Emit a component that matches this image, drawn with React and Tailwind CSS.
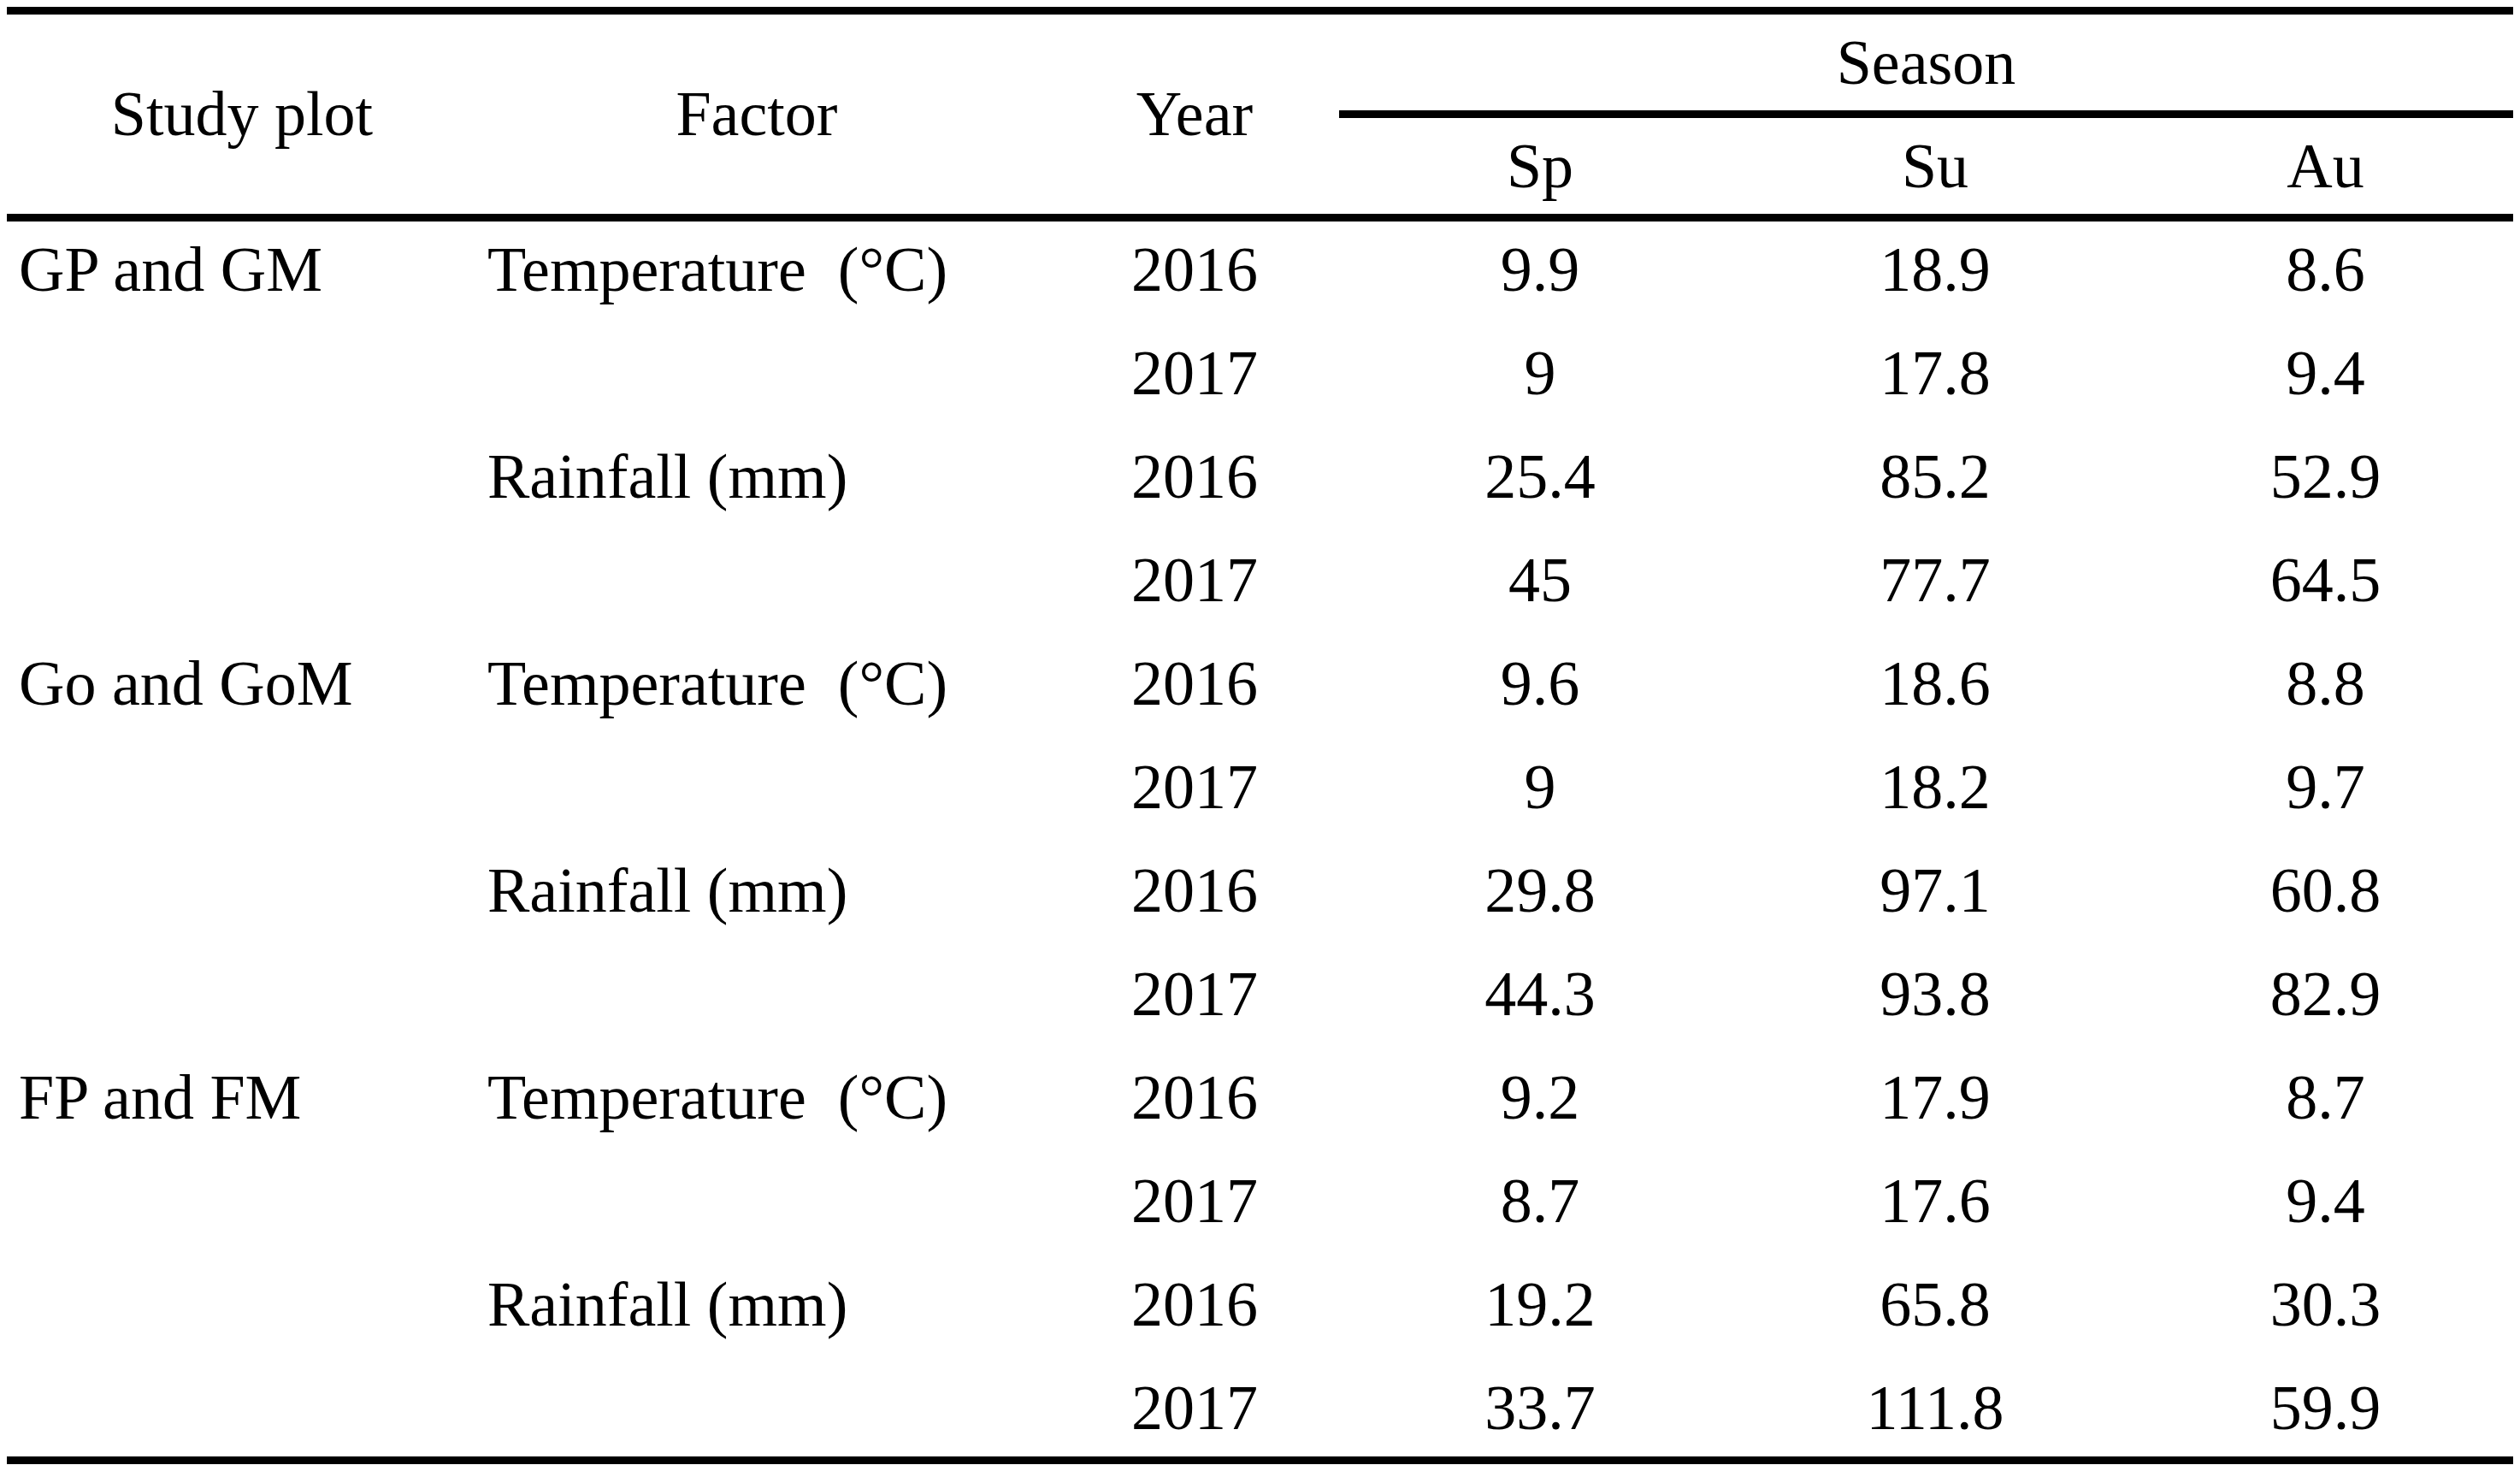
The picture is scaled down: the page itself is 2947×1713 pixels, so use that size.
const plots = [
  {
    name: "GP and GM",
    temp: [
      ["2016", "9.9", "18.9", "8.6"],
      ["2017", "9", "17.8", "9.4"],
    ],
    rain: [
      ["2016", "25.4", "85.2", "52.9"],
      ["2017", "45", "77.7", "64.5"],
    ],
  },
  {
    name: "Go and GoM",
    temp: [
      ["2016", "9.6", "18.6", "8.8"],
      ["2017", "9", "18.2", "9.7"],
    ],
    rain: [
      ["2016", "29.8", "97.1", "60.8"],
      ["2017", "44.3", "93.8", "82.9"],
    ],
  },
  {
    name: "FP and FM",
    temp: [
      ["2016", "9.2", "17.9", "8.7"],
      ["2017", "8.7", "17.6", "9.4"],
    ],
    rain: [
      ["2016", "19.2", "65.8", "30.3"],
      ["2017", "33.7", "111.8", "59.9"],
    ],
  },
];

// flatten into table rows
const rows = [];
plots.forEach((p) => {
  p.temp.forEach((r, i) =>
    rows.push({ plot: i === 0 ? p.name : "", factor: i === 0 ? "Temperature  (°C)" : "", vals: r })
  );
  p.rain.forEach((r, i) =>
    rows.push({ plot: "", factor: i === 0 ? "Rainfall (mm)" : "", vals: r })
  );
});

const cols = "grid grid-cols-[550px_654px_354px_464px_460px_449px]";

export default function App() {
  return (
    <div className="min-h-screen bg-white pl-[8px] pt-[8px] font-['Liberation_Serif','Times_New_Roman',serif] text-[74px] text-black">
      <div className="w-[2931px]">
        <div className="h-[9px] bg-black" />

        {/* Header */}
        <div className={`${cols} grid-rows-[112px_9px_112px]`}>
          <div className="row-span-3 flex items-center justify-center leading-[113px]">Study plot</div>
          <div className="row-span-3 flex items-center justify-center leading-[113px]">Factor</div>
          <div className="row-span-3 flex items-center justify-center pl-[16px] leading-[113px]">Year</div>
          <div className="col-span-3 text-center leading-[112px]">Season</div>
          <div className="col-span-3 bg-black" />
          <div className="pl-[6px] text-center leading-[112px]">Sp</div>
          <div className="pl-[6px] text-center leading-[112px]">Su</div>
          <div className="pl-[10px] text-center leading-[112px]">Au</div>
        </div>

        <div className="h-[9px] bg-black" />

        {/* Body */}
        {rows.map((r, i) => (
          <div
            key={i}
            className={`${cols} ${i === rows.length - 1 ? "h-[113px]" : "h-[121px]"} leading-[113px]`}
          >
            <div className="pl-[14px]">{r.plot}</div>
            <div className="whitespace-pre pl-[12px]">{r.factor}</div>
            <div className="pl-[16px] text-center">{r.vals[0]}</div>
            <div className="pl-[6px] text-center">{r.vals[1]}</div>
            <div className="pl-[6px] text-center">{r.vals[2]}</div>
            <div className="pl-[10px] text-center">{r.vals[3]}</div>
          </div>
        ))}

        <div className="h-[9px] bg-black" />
      </div>
    </div>
  );
}
